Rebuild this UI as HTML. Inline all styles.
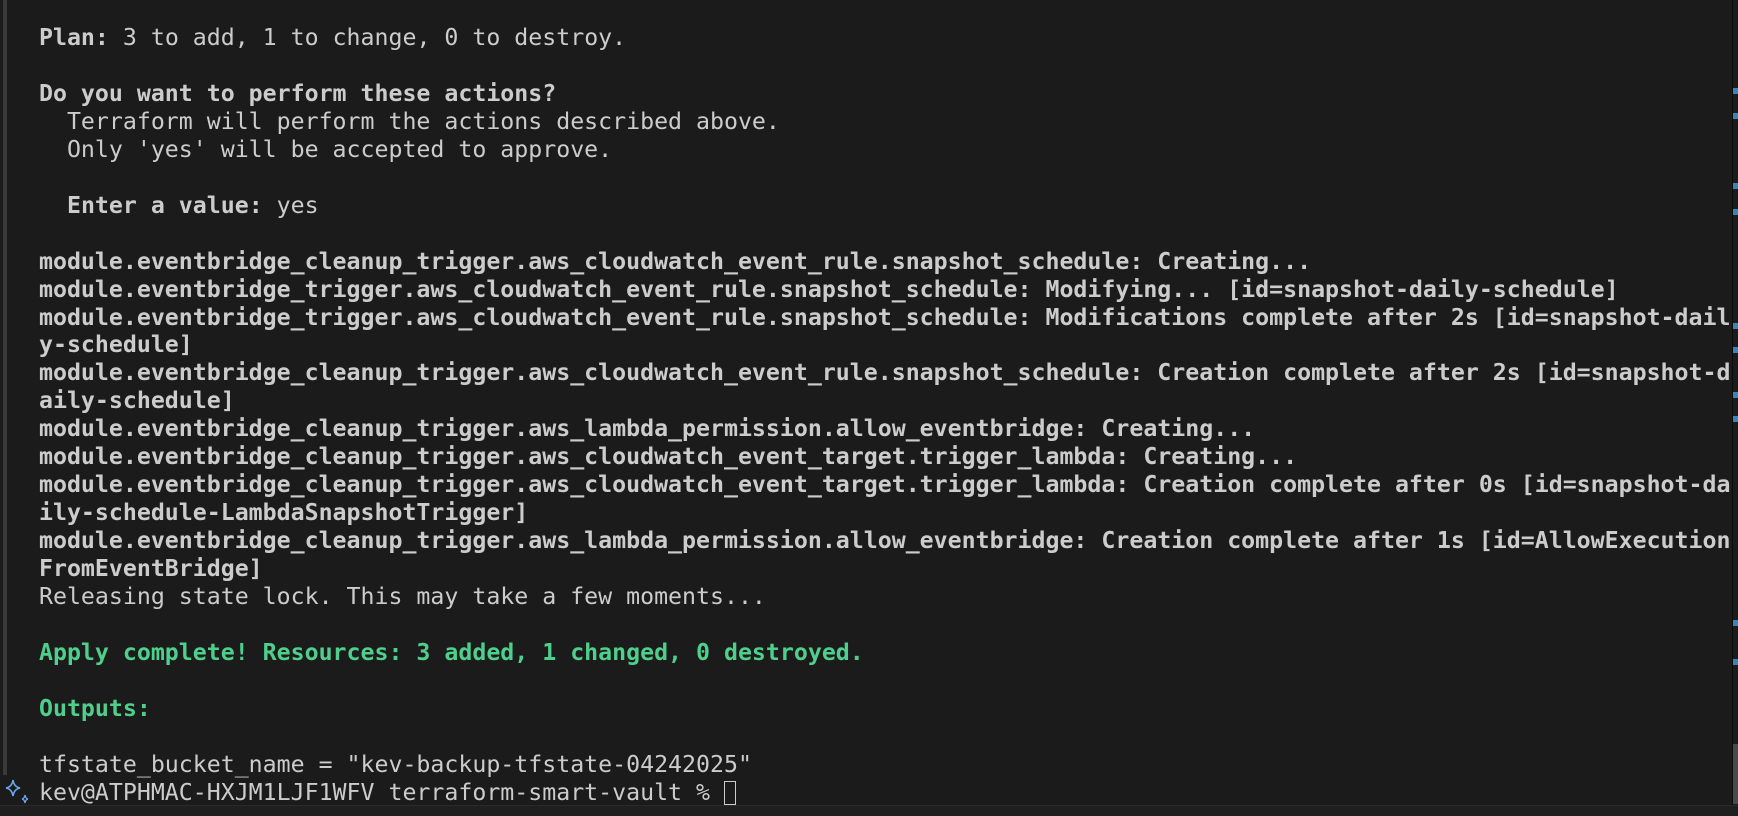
<!DOCTYPE html>
<html><head><meta charset="utf-8"><style>
html,body{margin:0;padding:0;background:#1b1b1b;width:1738px;height:816px;overflow:hidden;position:relative}
pre{position:absolute;left:39px;top:24px;margin:0;font-family:"DejaVu Sans Mono","Liberation Mono",monospace;font-size:23.23px;line-height:27.95px;color:#cccccc;white-space:pre}
b{font-weight:bold}
.g{color:#4fcf8c;font-weight:bold}
.cur{display:inline-block;width:12px;height:24px;border:1.5px solid #cccccc;vertical-align:-5px;box-sizing:border-box}
.bar{position:absolute;left:3px;top:0;width:4px;height:775px;background:#3a3a3a}
.vr{position:absolute;left:1732px;top:0;width:1px;height:806px;background:#0a0a0a}
.mk{position:absolute;left:1733px;width:5px;height:6px;background:#3b84b8}
.thumb{position:absolute;left:1733px;top:744px;width:5px;height:60px;background:#4a4a4a}
.bot{position:absolute;left:0;top:805px;width:1738px;height:11px;background:#1f1f1f;border-top:1px solid #2b2b2b}
</style></head><body>
<div class="bar"></div>
<pre><b>Plan:</b> 3 to add, 1 to change, 0 to destroy.

<b>Do you want to perform these actions?</b>
  Terraform will perform the actions described above.
  Only 'yes' will be accepted to approve.

  <b>Enter a value:</b> yes

<b>module.eventbridge_cleanup_trigger.aws_cloudwatch_event_rule.snapshot_schedule: Creating...</b>
<b>module.eventbridge_trigger.aws_cloudwatch_event_rule.snapshot_schedule: Modifying... [id=snapshot-daily-schedule]</b>
<b>module.eventbridge_trigger.aws_cloudwatch_event_rule.snapshot_schedule: Modifications complete after 2s [id=snapshot-dail</b>
<b>y-schedule]</b>
<b>module.eventbridge_cleanup_trigger.aws_cloudwatch_event_rule.snapshot_schedule: Creation complete after 2s [id=snapshot-d</b>
<b>aily-schedule]</b>
<b>module.eventbridge_cleanup_trigger.aws_lambda_permission.allow_eventbridge: Creating...</b>
<b>module.eventbridge_cleanup_trigger.aws_cloudwatch_event_target.trigger_lambda: Creating...</b>
<b>module.eventbridge_cleanup_trigger.aws_cloudwatch_event_target.trigger_lambda: Creation complete after 0s [id=snapshot-da</b>
<b>ily-schedule-LambdaSnapshotTrigger]</b>
<b>module.eventbridge_cleanup_trigger.aws_lambda_permission.allow_eventbridge: Creation complete after 1s [id=AllowExecution</b>
<b>FromEventBridge]</b>
Releasing state lock. This may take a few moments...

<span class="g">Apply complete! Resources: 3 added, 1 changed, 0 destroyed.</span>

<span class="g">Outputs:</span>

tfstate_bucket_name = "kev-backup-tfstate-04242025"
kev@ATPHMAC-HXJM1LJF1WFV terraform-smart-vault % <span class="cur"></span></pre>
<svg style="position:absolute;left:3px;top:778px" width="32" height="28" viewBox="0 0 32 28"><path d="M10 2 Q11 9 17 10 Q11 11 10 18 Q9 11 3 10 Q9 9 10 2Z" fill="none" stroke="#6aa8f0" stroke-width="1.5"/><path d="M22 17 Q22.5 20.5 25 21 Q22.5 21.5 22 25 Q21.5 21.5 19 21 Q21.5 20.5 22 17Z" fill="none" stroke="#6aa8f0" stroke-width="1.3"/></svg>
<div class="vr"></div>
<div class="mk" style="top:88px"></div><div class="mk" style="top:113px"></div>
<div class="mk" style="top:183px"></div><div class="mk" style="top:209px"></div>
<div class="mk" style="top:323px"></div><div class="mk" style="top:347px"></div>
<div class="mk" style="top:392px"></div><div class="mk" style="top:416px"></div>
<div class="mk" style="top:620px"></div><div class="mk" style="top:659px"></div>
<div class="thumb"></div>
<div class="bot"></div>
</body></html>
